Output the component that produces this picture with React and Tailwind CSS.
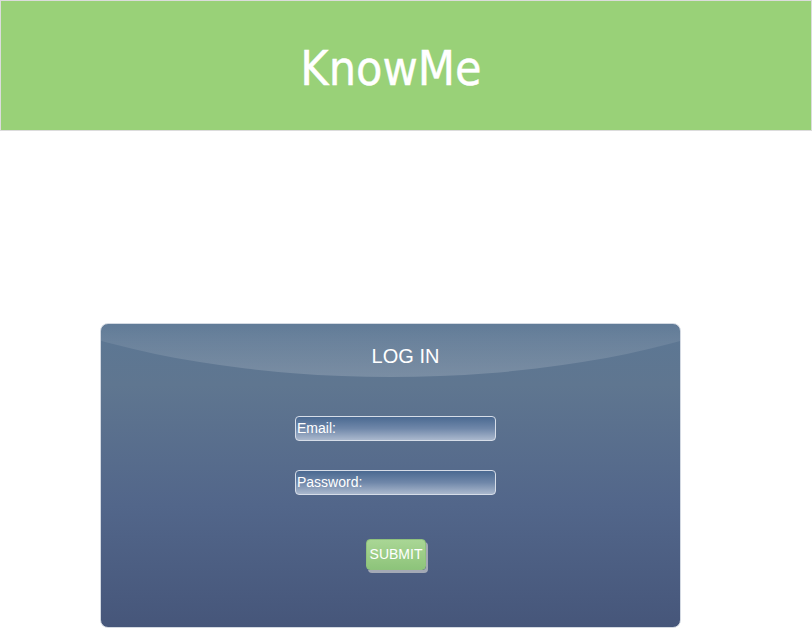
export default function App() {
  return (
    <div className="w-[812px] h-[629px] bg-white overflow-hidden" style={{ fontFamily: '"Liberation Sans", Arial, sans-serif' }}>
      <header className="h-[131px] w-[812px] border border-[#dcdcdc] bg-[#99d178] flex items-center justify-center pr-[30px] pt-[4px]">
        <h1
          className="text-white text-[48px] leading-[56px] font-normal"
          style={{ fontFamily: '"DejaVu Sans Condensed", "DejaVu Sans", sans-serif', fontStretch: 'condensed', WebkitTextStroke: '0.4px white' }}
        >
          KnowMe
        </h1>
      </header>
      <div className="relative mt-[192px] ml-[100px] w-[581px] h-[305px] rounded-[8px] overflow-hidden border border-[#d3d9e2] bg-[linear-gradient(to_bottom,#5c7794_0%,#5f7690_20%,#52668a_60%,#46567a_100%)]">
        <div className="absolute left-[-210px] top-[-338px] w-[1000px] h-[391px] rounded-[50%] bg-[linear-gradient(to_bottom,rgba(255,255,255,0)_84%,rgba(255,255,255,0.08)_90%,rgba(255,255,255,0.17)_100%)]" />
        <div className="relative flex flex-col">
          <div className="pt-[20px] pl-[30px] text-center text-white text-[20px] leading-[24px]">LOG IN</div>
          <div className="mt-[48px] ml-[194px] flex flex-col gap-[29px]">
            <div className="w-[201px] h-[25px] rounded-[4px] border border-[#d6dde8] bg-[linear-gradient(to_bottom,#4a6991_0%,#6f87a9_50%,#aab8cd_100%)] flex items-center pl-[1px] text-white text-[14px]">
              Email:
            </div>
            <div className="w-[201px] h-[25px] rounded-[4px] border border-[#d6dde8] bg-[linear-gradient(to_bottom,#4a6991_0%,#6f87a9_50%,#aab8cd_100%)] flex items-center pl-[1px] text-white text-[14px]">
              Password:
            </div>
          </div>
          <div className="mt-[44px] ml-[265px]">
            <button className="w-[60px] h-[31px] rounded-[4px] border border-[#8fc27c] bg-[linear-gradient(to_bottom,#a9d695_0%,#9ccd87_50%,#8dc47b_100%)] text-white text-[14px] leading-none shadow-[2px_3px_0_#a3a9b5] flex items-center justify-center pb-[2px]">
              SUBMIT
            </button>
          </div>
        </div>
      </div>
    </div>
  );
}
